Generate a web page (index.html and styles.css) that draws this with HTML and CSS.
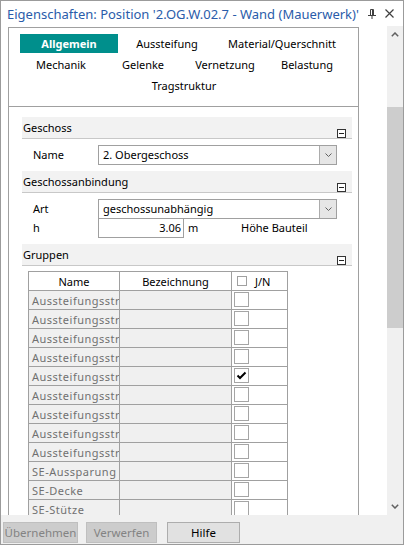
FILE: index.html
```html
<!DOCTYPE html>
<html lang="de">
<head>
<meta charset="utf-8">
<title>Eigenschaften</title>
<link rel="stylesheet" href="styles.css">
</head>
<body>
<div class="window">
  <div class="titlebar">
    <span class="title">Eigenschaften: Position '2.OG.W.02.7 - Wand (Mauerwerk)'</span>
    <span class="tb-icons">
      <svg class="pin" width="8" height="10" viewBox="0 0 8 10"><path d="M2.5 0.5h3v5.5M2.5 0.5v5.5M4.5 0.5v5.5M0 6.5h8M4 6.5v3.5" fill="none" stroke="#404040" stroke-width="1"/></svg>
      <svg class="close" width="9" height="9" viewBox="0 0 9 9"><path d="M0.5 0.5l8 8M8.5 0.5l-8 8" stroke="#404040" stroke-width="1.2"/></svg>
    </span>
  </div>
  <div class="main">
    <div class="content">
      <div class="panel">
        <div class="tabs">
          <div class="tabrow r1">
            <div class="tab active">Allgemein</div>
            <div class="tab">Aussteifung</div>
            <div class="tab">Material/Querschnitt</div>
          </div>
          <div class="tabrow r2">
            <div class="tab">Mechanik</div>
            <div class="tab">Gelenke</div>
            <div class="tab">Vernetzung</div>
            <div class="tab">Belastung</div>
          </div>
          <div class="tabrow r3">
            <div class="tab">Tragstruktur</div>
          </div>
        </div>
        <div class="sections">
          <div class="sec-head"><span class="sec-title">Geschoss</span><span class="collapse"></span></div>
          <div class="prop-row">
            <span class="label">Name</span>
            <div class="combo"><span class="val">2. Obergeschoss</span><span class="drop"><svg width="7" height="4" viewBox="0 0 7 4"><path d="M0.5 0.5l3 3 3-3" fill="none" stroke="#606060" stroke-width="1"/></svg></span></div>
          </div>
          <div class="sec-head"><span class="sec-title">Geschossanbindung</span><span class="collapse"></span></div>
          <div class="prop-row">
            <span class="label">Art</span>
            <div class="combo"><span class="val">geschossunabhängig</span><span class="drop"><svg width="7" height="4" viewBox="0 0 7 4"><path d="M0.5 0.5l3 3 3-3" fill="none" stroke="#606060" stroke-width="1"/></svg></span></div>
          </div>
          <div class="prop-row joined">
            <span class="label">h</span>
            <div class="numbox">3.06</div>
            <span class="unit">m</span>
            <span class="desc">Höhe Bauteil</span>
          </div>
          <div class="sec-head"><span class="sec-title">Gruppen</span><span class="collapse"></span></div>
          <div class="grid">
            <div class="hc">Name</div>
            <div class="hc">Bezeichnung</div>
            <div class="hc jn"><span class="mini-cb"></span>J/N</div>

            <div class="nc">Aussteifungsstreben</div><div class="bc"></div><div class="cc"><span class="cb"></span></div>
            <div class="nc">Aussteifungsstreben</div><div class="bc"></div><div class="cc"><span class="cb"></span></div>
            <div class="nc">Aussteifungsstreben</div><div class="bc"></div><div class="cc"><span class="cb"></span></div>
            <div class="nc">Aussteifungsstreben</div><div class="bc"></div><div class="cc"><span class="cb"></span></div>
            <div class="nc">Aussteifungsstreben</div><div class="bc"></div><div class="cc"><span class="cb checked"><svg width="11" height="9" viewBox="0 0 11 9"><path d="M1.5 4.5l2.5 2.5 5.5-5.5" fill="none" stroke="#000" stroke-width="2"/></svg></span></div>
            <div class="nc">Aussteifungsstreben</div><div class="bc"></div><div class="cc"><span class="cb"></span></div>
            <div class="nc">Aussteifungsstreben</div><div class="bc"></div><div class="cc"><span class="cb"></span></div>
            <div class="nc">Aussteifungsstreben</div><div class="bc"></div><div class="cc"><span class="cb"></span></div>
            <div class="nc">Aussteifungsstreben</div><div class="bc"></div><div class="cc"><span class="cb"></span></div>
            <div class="nc">SE-Aussparung</div><div class="bc"></div><div class="cc"><span class="cb"></span></div>
            <div class="nc">SE-Decke</div><div class="bc"></div><div class="cc"><span class="cb"></span></div>
            <div class="nc">SE-Stütze</div><div class="bc"></div><div class="cc"><span class="cb"></span></div>
          </div>
        </div>
      </div>
    </div>
    <div class="scrollbar">
      <div class="sb-btn"><svg width="8" height="5" viewBox="0 0 8 5"><path d="M0.8 4.2l3.2-3.2 3.2 3.2" fill="none" stroke="#606060" stroke-width="1.5"/></svg></div>
      <div class="sb-track"><div class="sb-thumb"></div></div>
      <div class="sb-btn"><svg width="8" height="5" viewBox="0 0 8 5"><path d="M0.8 0.8l3.2 3.2 3.2-3.2" fill="none" stroke="#606060" stroke-width="1.5"/></svg></div>
    </div>
  </div>
  <div class="buttonbar">
    <button class="btn b1" disabled>Übernehmen</button>
    <button class="btn b2" disabled>Verwerfen</button>
    <button class="btn b3">Hilfe</button>
  </div>
</div>
</body>
</html>
```
FILE: styles.css
```css
* { box-sizing: border-box; }
body {
  margin: 0;
  font-family: "Noto Sans", "Liberation Sans", sans-serif;
  font-size: 11px;
  color: #000;
  background: #fff;
}
.window {
  width: 404px;
  height: 545px;
  border: 1px solid #9b9b9b;
  display: flex;
  flex-direction: column;
  background: #fff;
  overflow: hidden;
}
.titlebar {
  height: 25px;
  flex: none;
  display: flex;
  align-items: center;
  padding-left: 6px;
}
.title {
  flex: 1;
  color: #2a5caa;
  font-size: 13px;
  white-space: nowrap;
  overflow: hidden;
}
.tb-icons {
  display: flex;
  align-items: center;
  gap: 9px;
  padding-right: 9px;
}
.main {
  flex: none;
  height: 489px;
  display: flex;
}
.content {
  width: 386px;
  overflow: hidden;
}
.panel {
  margin: 1px 0 0 7px;
  width: 351px;
  min-height: 600px;
  border: 1px solid #a0a0a0;
}
.tabs {
  padding: 6px 10px 11px 11px;
  border-bottom: 1px solid #a0a0a0;
  display: flex;
  flex-direction: column;
  gap: 2px;
}
.tabrow { display: grid; height: 19px; }
.r1 { grid-template-columns: 98px 98px 1fr; }
.r2 { grid-template-columns: repeat(4, 1fr); }
.r3 { grid-template-columns: 1fr; }
.tab {
  display: flex;
  align-items: center;
  justify-content: center;
  white-space: nowrap;
}
.tab.active {
  background: #008f8c;
  color: #fff;
  font-weight: bold;
}
.sections {
  padding: 10px 6px 0 13px;
}
.sec-head {
  height: 22px;
  background: #f2f2f2;
  border-bottom: 1px solid #c8c8c8;
  display: flex;
  justify-content: space-between;
}
.sec-title {
  padding-left: 1px;
  align-self: center;
}
.collapse {
  align-self: flex-end;
  width: 9px;
  height: 9px;
  margin-right: 6px;
  margin-bottom: 0;
  border: 1px solid #333;
  background: #fff linear-gradient(#222, #222) center / 5px 1px no-repeat;
}
.prop-row {
  margin: 6px 0;
  height: 20px;
  display: flex;
  align-items: center;
}
.prop-row.joined { margin-top: -7px; }
.label {
  width: 76px;
  padding-left: 11px;
  padding-bottom: 2px;
}
.combo {
  width: 239px;
  height: 20px;
  border: 1px solid #a0a0a0;
  display: flex;
}
.val {
  flex: 1;
  padding-left: 4px;
  padding-bottom: 1px;
  display: flex;
  align-items: center;
}
.drop {
  width: 17px;
  background: #e6e6e6;
  border-left: 1px solid #acacac;
  display: flex;
  align-items: center;
  justify-content: center;
}
.numbox {
  width: 86px;
  height: 20px;
  border: 1px solid #a0a0a0;
  padding-right: 2px;
  padding-bottom: 1px;
  display: flex;
  align-items: center;
  justify-content: flex-end;
}
.unit { margin-left: 4px; width: 53px; padding-bottom: 2px; }
.desc { padding-bottom: 2px; }
.grid {
  margin: 5px 0 0 6px;
  width: 260px;
  display: grid;
  grid-template-columns: 91px 112px 56px;
  grid-auto-rows: 19px;
  border-left: 1px solid #a0a0a0;
  border-top: 1px solid #a0a0a0;
}
.grid > div {
  border-right: 1px solid #a0a0a0;
  border-bottom: 1px solid #a0a0a0;
  overflow: hidden;
  white-space: nowrap;
}
.hc {
  display: flex;
  align-items: center;
  justify-content: center;
}
.hc.jn {
  justify-content: flex-start;
  padding-left: 5px;
}
.mini-cb {
  width: 10px;
  height: 10px;
  border: 1px solid #a0a0a0;
  margin-right: 8px;
}
.nc {
  background: #f0f0f0;
  color: #707070;
  padding-left: 3px;
  letter-spacing: 0.5px;
  display: flex;
  align-items: center;
}
.bc { background: #f0f0f0; }
.cc { padding: 1px 0 0 2px; }
.cb {
  display: flex;
  align-items: center;
  justify-content: center;
  width: 15px;
  height: 15px;
  border: 1px solid #a5a5a5;
  background: #fff;
}
.scrollbar {
  width: 16px;
  background: #f0f0f0;
  display: flex;
  flex-direction: column;
}
.sb-btn {
  height: 17px;
  flex: none;
  display: flex;
  align-items: center;
  justify-content: center;
}
.sb-track { flex: 1; }
.sb-thumb {
  margin-top: 64px;
  height: 221px;
  background: #cdcdcd;
}
.buttonbar {
  flex: 1;
  background: #f0f0f0;
  padding: 7px 0 0 2px;
  display: flex;
  align-items: flex-start;
}
.btn {
  height: 21px;
  font-family: inherit;
  font-size: 11.5px;
  padding: 0;
  border: 1px solid #adadad;
  background: #e1e1e1;
  color: #000;
}
.btn:disabled {
  background: #cccccc;
  border-color: #bfbfbf;
  color: #838383;
}
.b1 { width: 75px; }
.b2 { width: 71px; margin-left: 8px; }
.b3 { width: 73px; margin-left: 10px; }
```
